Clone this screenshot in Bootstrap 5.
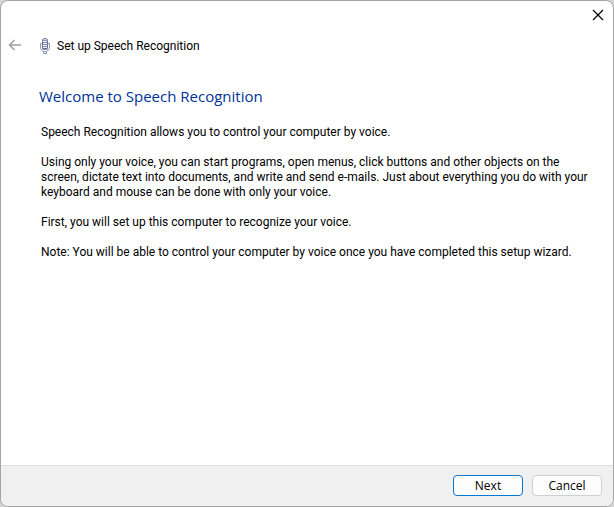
<!DOCTYPE html>
<html lang="en">
<head>
<meta charset="utf-8">
<meta name="viewport" content="width=device-width, initial-scale=1">
<title>Set up Speech Recognition</title>
<link href="https://cdn.jsdelivr.net/npm/bootstrap@5.3.0/dist/css/bootstrap.min.css" rel="stylesheet">
<style>
  body { font-family: Roboto, "Liberation Sans", sans-serif; font-size: 12px; line-height: 15px; color: #000; background: #d4d4d4; }
  .wizard { border: 1px solid #a4a4a4; border-radius: 8px; }
  .close-button { width: 30px; height: 28px; color: #000; }
  .back-button { color: #a0a0a0; width: 28px; }
  .wizard-header { height: 34px; }
  .wizard-title { font-size: 12px; line-height: 16px; }
  .wizard-body { padding: 24px 24px 0 40px; }
  .wizard-heading { font-family: "Open Sans", "Noto Sans", sans-serif; font-size: 15px; line-height: 18px; color: #003399; margin: 0 0 20px -2px; }
  .wizard-body p { margin-bottom: 15px; }
  .wizard-footer { background: #f0f0f0; border-top: 1px solid #dfdfdf; padding: 9px 11px 10px; gap: 9px; }
  .wizard-button { font-family: "Open Sans", "Noto Sans", sans-serif; width: 70px; height: 21px; font-size: 12px; line-height: 17px; border: 1px solid #d0d0d0; border-radius: 4px; background: #fdfdfd; color: #000; }
  .wizard-button.is-default { border-color: #0078d4; }
</style>
</head>
<body>
<main class="wizard bg-white d-flex flex-column min-vh-100 overflow-hidden">
  <div class="d-flex justify-content-end">
    <button type="button" class="btn close-button border-0 p-0 d-flex align-items-center justify-content-center" aria-label="Close">
      <svg width="12" height="12" viewBox="0 0 12 12" fill="none" stroke="currentColor" stroke-width="1.2" aria-hidden="true"><path d="M1 1L11 11M11 1L1 11"/></svg>
    </button>
  </div>
  <header class="wizard-header d-flex align-items-center">
    <button type="button" class="btn back-button border-0 p-0 d-flex justify-content-center" aria-label="Back">
      <svg width="14" height="14" viewBox="0 0 14 14" fill="none" stroke="currentColor" stroke-width="1.5" aria-hidden="true"><path d="M13 6H1.5M6.5 1L1.5 6L6.5 11"/></svg>
    </button>
    <svg class="ms-2" width="16" height="16" viewBox="0 0 16 16" fill="none" stroke="#687099" aria-hidden="true">
      <path d="M5.5 10.5V2.5Q5.5.5 8 .5T10.5 2.5V10.5Z" fill="#eceef5"/>
      <path d="M6 2.5H10M6 4.5H10M6 6.5H10M6 8.5H10" stroke="#8c93b0"/>
      <path d="M5 5.5H3.5V10.5Q4.5 12.5 6.5 13.5V15.5H9.5V13.5Q11.5 12.5 12.5 10.5V5.5H11M5.5 11.5H10.5M7 13.5H9" stroke="#8c93b0"/>
    </svg>
    <h1 class="wizard-title fw-normal m-0 ps-1">Set up Speech Recognition</h1>
  </header>
  <section class="wizard-body flex-grow-1">
    <h2 class="wizard-heading fw-normal">Welcome to Speech Recognition</h2>
    <p>Speech Recognition allows you to control your computer by voice.</p>
    <p>Using only your voice, you can start programs, open menus, click buttons and other objects on the screen, dictate text into documents, and write and send e-mails. Just about everything you do with your keyboard and mouse can be done with only your voice.</p>
    <p>First, you will set up this computer to recognize your voice.</p>
    <p>Note: You will be able to control your computer by voice once you have completed this setup wizard.</p>
  </section>
  <footer class="wizard-footer d-flex justify-content-end">
    <button type="button" class="btn wizard-button is-default p-0">Next</button>
    <button type="button" class="btn wizard-button p-0">Cancel</button>
  </footer>
</main>
<script src="https://cdn.jsdelivr.net/npm/bootstrap@5.3.0/dist/js/bootstrap.bundle.min.js"></script>
</body>
</html>
